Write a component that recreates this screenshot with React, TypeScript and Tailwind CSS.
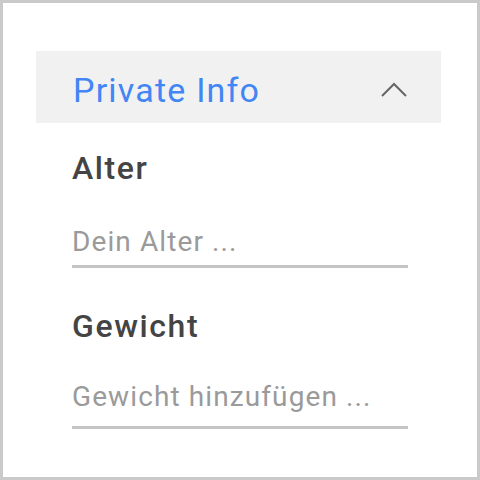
import { useState } from "react";

type Field = {
  label: string;
  placeholder: string;
  top: string;
  gap: string;
  bottom: string;
};

// spacing per field is taken from the mock, the two rows are not equal
const fields: Field[] = [
  { label: "Alter", placeholder: "Dein Alter ...", top: "pt-[27px]", gap: "mt-[40px]", bottom: "pb-[7px]" },
  { label: "Gewicht", placeholder: "Gewicht hinzufügen ...", top: "pt-[40px]", gap: "mt-[37px]", bottom: "pb-[13px]" },
];

const Chevron = ({ open }: { open: boolean }) => (
  <svg
    width="26"
    height="15"
    viewBox="0 0 26 15"
    fill="none"
    className={open ? "" : "rotate-180"}
  >
    <path d="M1 14 L13 2 L25 14" stroke="#666666" strokeWidth="2" />
  </svg>
);

export default function App() {
  const [open, setOpen] = useState(true);

  return (
    <div
      className="w-[480px] h-[480px] border-[3px] border-[#cacaca] bg-white pt-[48px] pl-[33px]"
      style={{ fontFamily: "Roboto, 'Noto Sans', sans-serif" }}
    >
      <button
        type="button"
        onClick={() => setOpen(!open)}
        className="w-[405px] h-[72px] bg-[#f1f1f1] flex items-center justify-between pt-[5px] pl-[37px] pr-[34px]"
      >
        <span className="text-[34px] leading-none tracking-[1.2px] text-[#4285f4]">
          Private Info
        </span>
        <Chevron open={open} />
      </button>

      {open && (
        <div className="pl-[36px] w-[372px]">
          {fields.map((f) => (
            <div key={f.label} className={f.top}>
              <div className="text-[32px] leading-[36px] font-medium tracking-[1.6px] text-[#444444]">
                {f.label}
              </div>
              <div className={`${f.gap} ${f.bottom} border-b-[3px] border-[#c4c4c4]`}>
                <input
                  placeholder={f.placeholder}
                  className="block w-full h-[32px] text-[28px] leading-[32px] tracking-[1.1px] bg-transparent outline-none placeholder:text-[#9a9a9a] text-[#444444]"
                />
              </div>
            </div>
          ))}
        </div>
      )}
    </div>
  );
}
